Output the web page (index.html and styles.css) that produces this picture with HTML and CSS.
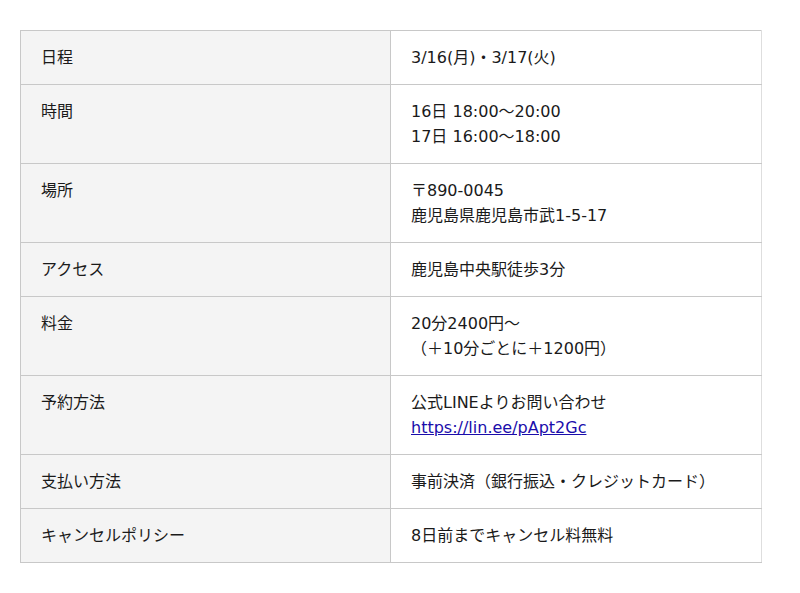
FILE: index.html
```html
<!DOCTYPE html>
<html lang="ja">
<head>
<meta charset="utf-8">
<link rel="stylesheet" href="styles.css">
</head>
<body>
<table class="info">
  <tr><th>日程</th><td>3/16(月)・3/17(火)</td></tr>
  <tr><th>時間</th><td>16日 18:00〜20:00<br>17日 16:00〜18:00</td></tr>
  <tr><th>場所</th><td>〒890-0045<br>鹿児島県鹿児島市武1-5-17</td></tr>
  <tr><th>アクセス</th><td>鹿児島中央駅徒歩3分</td></tr>
  <tr><th>料金</th><td>20分2400円〜<br>（＋10分ごとに＋1200円）</td></tr>
  <tr><th>予約方法</th><td>公式LINEよりお問い合わせ<br><a href="#">https://lin.ee/pApt2Gc</a></td></tr>
  <tr><th>支払い方法</th><td>事前決済（銀行振込・クレジットカード）</td></tr>
  <tr><th>キャンセルポリシー</th><td>8日前までキャンセル料無料</td></tr>
</table>
</body>
</html>
```
FILE: styles.css
```css
body {
  margin: 0;
  padding: 30px 20px;
  background: #fff;
  font-family: "DejaVu Sans", "Noto Sans CJK JP", sans-serif;
  font-size: 16px;
  color: #1a1a1a;
}
.info {
  width: 742px;
  border-collapse: collapse;
  table-layout: fixed;
}
.info th, .info td {
  border: 1px solid #c8c8c8;
  padding: 14px 20px;
  line-height: 25px;
  text-align: left;
  vertical-align: top;
  font-weight: normal;
}
.info th {
  width: 329px;
  background: #f4f4f4;
}
.info td {
  border-right-color: #dedede;
}
.info a {
  color: #1a0dab;
}
```
